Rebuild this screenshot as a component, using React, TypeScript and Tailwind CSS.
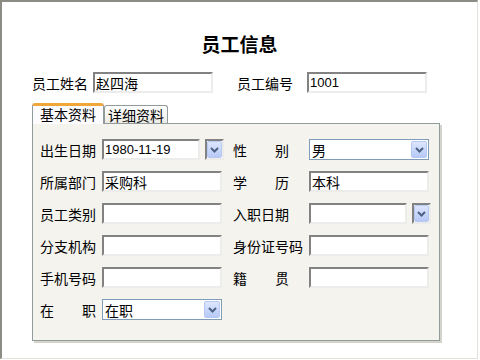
import React from "react";

const font = { fontFamily: '"Noto Sans CJK SC", "Liberation Sans", sans-serif' };

function Chevron() {
  return (
    <svg width="9" height="6" viewBox="0 0 9 6">
      <path d="M1 1 L4.5 4.5 L8 1" fill="none" stroke="#4d6185" strokeWidth="2" />
    </svg>
  );
}

function DropButton({ className = "" }: { className?: string }) {
  return (
    <div
      className={`flex items-center justify-center rounded-[2px] border border-[#b7c9f3] bg-gradient-to-b from-[#dde6fd] to-[#b6c9f6] ${className}`}
    >
      <Chevron />
    </div>
  );
}

function TextBox({ value = "", w = "w-[120px]", mono = false }: { value?: string; w?: string; mono?: boolean }) {
  return (
    <div
      className={`${w} h-[21px] border-2 border-t-[#828282] border-l-[#828282] border-b-[#ececea] border-r-[#ececea] bg-white flex items-center pl-[1px] overflow-hidden`}
    >
      <span
        className={mono ? "text-[13px] leading-none text-black" : "text-[14px] leading-none text-black"}
        style={mono ? { fontFamily: '"Liberation Sans", sans-serif' } : undefined}
      >
        {value}
      </span>
    </div>
  );
}

function DateBox({ value = "", w }: { value?: string; w: string }) {
  return (
    <div className="flex items-center">
      <TextBox value={value} w={w} mono />
      <div className="ml-[5px] w-[19px] h-[21px] border-2 border-t-[#828282] border-l-[#828282] border-b-[#ececea] border-r-[#ececea] bg-white">
        <DropButton className="w-full h-full" />
      </div>
    </div>
  );
}

function Select({ value }: { value: string }) {
  return (
    <div className="w-[120px] h-[21px] border border-[#7f9db9] bg-white flex items-center justify-between pl-[2px] pr-[1px]">
      <span className="text-[14px] leading-none text-black">{value}</span>
      <DropButton className="w-[16px] h-[17px]" />
    </div>
  );
}

function Label({ text, w }: { text: string; w: string }) {
  return (
    <div className={`${w} shrink-0`}>
      <div className="w-[56px] text-[14px] leading-none text-black text-justify [text-align-last:justify]">{text}</div>
    </div>
  );
}

function WideLabel({ text }: { text: string }) {
  return (
    <div className="w-[76px] shrink-0">
      <div className="text-[14px] leading-none text-black whitespace-nowrap">{text}</div>
    </div>
  );
}

export default function App() {
  return (
    <div className="w-[480px] h-[360px] bg-white" style={font}>
      <div className="w-[478px] h-[359px] border-t-2 border-l-2 border-t-[#8c8c84] border-l-[#8c8c84] border-r border-b border-r-[#e2e2da] border-b-[#e2e2da] bg-white">
        {/* Title */}
        <div className="pt-[30px] h-[54px] text-center text-[19px] leading-[24px] font-bold text-black">员工信息</div>

        {/* Name / number */}
        <div className="mt-[16px] flex items-center pl-[30px]">
          <Label text="员工姓名" w="w-[61px]" />
          <TextBox value="赵四海" />
          <div className="w-[24px]" />
          <WideLabel text="员工编号" />
          <div className="-ml-[6px]">
            <TextBox value="1001" mono />
          </div>
        </div>

        {/* Tabs */}
        <div className="mt-[10px] pl-[30px] flex items-end h-[20px]">
          <div className="w-[72px] h-[20px] relative z-10 border-x border-[#919b9c] bg-[#fcfcfe] border-t-[3px] border-t-[#f0a73a] rounded-t-[3px] flex items-start justify-center pt-[1px] -mb-[1px] h-[21px]">
            <span className="text-[14px] leading-none text-black">基本资料</span>
          </div>
          <div className="w-[64px] h-[18px] border border-b-0 border-[#919b9c] rounded-t-[3px] bg-gradient-to-b from-white to-[#ecebe5] flex items-center justify-center">
            <span className="text-[14px] leading-none text-black">详细资料</span>
          </div>
        </div>

        {/* Panel */}
        <div className="ml-[30px] w-[408px] h-[218px] border border-[#919b9c] bg-[#f4f3ee] shadow-[2px_2px_0_#d4d3cc] pt-[15px] pl-[7px] flex flex-col gap-[11px]">
          <div className="flex items-center">
            <Label text="出生日期" w="w-[62px]" />
            <DateBox value="1980-11-19" w="w-[98px]" />
            <div className="w-[9px]" />
            <Label text="性别" w="w-[76px]" />
            <Select value="男" />
          </div>
          <div className="flex items-center">
            <Label text="所属部门" w="w-[62px]" />
            <TextBox value="采购科" />
            <div className="w-[11px]" />
            <Label text="学历" w="w-[76px]" />
            <TextBox value="本科" />
          </div>
          <div className="flex items-center">
            <Label text="员工类别" w="w-[62px]" />
            <TextBox />
            <div className="w-[11px]" />
            <Label text="入职日期" w="w-[76px]" />
            <DateBox w="w-[98px]" />
          </div>
          <div className="flex items-center">
            <Label text="分支机构" w="w-[62px]" />
            <TextBox />
            <div className="w-[11px]" />
            <WideLabel text="身份证号码" />
            <TextBox />
          </div>
          <div className="flex items-center">
            <Label text="手机号码" w="w-[62px]" />
            <TextBox />
            <div className="w-[11px]" />
            <Label text="籍贯" w="w-[76px]" />
            <TextBox />
          </div>
          <div className="flex items-center">
            <Label text="在职" w="w-[62px]" />
            <Select value="在职" />
          </div>
        </div>
      </div>
    </div>
  );
}
